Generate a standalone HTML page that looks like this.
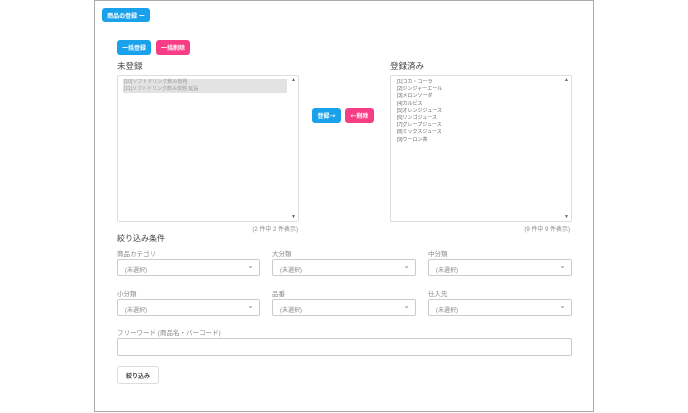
<!DOCTYPE html><html><head><meta charset="utf-8"><style>
*{box-sizing:border-box;margin:0;padding:0}
body{width:688px;height:413px;background:#fff;font-family:"Liberation Sans","Noto Sans CJK JP",sans-serif;position:relative;overflow:hidden;color:#555}
.a{position:absolute}
.frame{left:94px;top:0;width:500px;height:412px;border:1px solid #aaa}
.btn{position:absolute;color:#fff;font-size:6px;font-weight:bold;border-radius:3px;display:flex;align-items:center;justify-content:center}
.b{background:#1aa1eb}.p{background:#f73d85}
.ar{font-family:"DejaVu Sans",sans-serif;font-weight:normal;font-size:7px}
.h{font-size:8.5px;color:#444}
.lb{position:absolute;border:1px solid #ddd;border-radius:2px;background:#fff}
.it{font-size:5px;color:#666;line-height:7.2px}
.lab{font-size:6.5px;color:#888}
.sel{position:absolute;height:17px;border:1px solid #ccc;border-radius:2px;font-size:6px;color:#888;padding:5px 7px}
.sel:after{content:"⌄";position:absolute;right:5px;top:1px;font-size:8px;color:#888}
.cnt{font-size:6px;color:#888}
</style></head><body>
<div class="a frame"></div>
<div class="btn b" style="left:102px;top:8px;width:48px;height:14px">商品の登録 ー</div>
<div class="btn b" style="left:117px;top:40px;width:34px;height:15px">一括登録</div>
<div class="btn p" style="left:156px;top:40px;width:34px;height:15px">一括削除</div>
<div class="a h" style="left:117px;top:60px">未登録</div>
<div class="a h" style="left:390px;top:60px">登録済み</div>
<div class="lb" style="left:117px;top:75px;width:182px;height:147px">
<div style="position:absolute;left:5px;top:3px;width:164px;height:14px;background:#e3e3e3"></div>
<div class="it" style="position:absolute;left:6px;top:3px;color:#999">[10]ソフトドリンク飲み放題<br>[11]ソフトドリンク飲み放題 延長</div>
<div style="position:absolute;right:2px;top:1px;font-size:5px;color:#666">▲</div>
<div style="position:absolute;right:2px;bottom:1px;font-size:5px;color:#666">▼</div>
</div>
<div class="lb" style="left:390px;top:75px;width:182px;height:147px">
<div class="it" style="position:absolute;left:6px;top:3px">[1]コカ・コーラ<br>[2]ジンジャーエール<br>[3]メロンソーダ<br>[4]カルピス<br>[5]オレンジジュース<br>[6]リンゴジュース<br>[7]グレープジュース<br>[8]ミックスジュース<br>[9]ウーロン茶</div>
<div style="position:absolute;right:2px;top:1px;font-size:5px;color:#666">▲</div>
<div style="position:absolute;right:2px;bottom:1px;font-size:5px;color:#666">▼</div>
</div>
<div class="btn b" style="left:312px;top:108px;width:29px;height:15px">登録<span class="ar">→</span></div>
<div class="btn p" style="left:345px;top:108px;width:29px;height:15px"><span class="ar">←</span>削除</div>
<div class="a cnt" style="left:230px;top:224px;width:68px;text-align:right">(2 件中 2 件表示)</div>
<div class="a cnt" style="left:500px;top:224px;width:70px;text-align:right">(9 件中 9 件表示)</div>
<div class="a h" style="left:117px;top:233px;font-size:8px">絞り込み条件</div>
<div class="a lab" style="left:117px;top:248px">商品カテゴリ</div>
<div class="a lab" style="left:272px;top:248px">大分類</div>
<div class="a lab" style="left:428px;top:248px">中分類</div>
<div class="sel" style="left:117px;top:259px;width:143px">(未選択)</div>
<div class="sel" style="left:272px;top:259px;width:144px">(未選択)</div>
<div class="sel" style="left:428px;top:259px;width:144px">(未選択)</div>
<div class="a lab" style="left:117px;top:288px">小分類</div>
<div class="a lab" style="left:272px;top:288px">品番</div>
<div class="a lab" style="left:428px;top:288px">仕入先</div>
<div class="sel" style="left:117px;top:299px;width:143px">(未選択)</div>
<div class="sel" style="left:272px;top:299px;width:144px">(未選択)</div>
<div class="sel" style="left:428px;top:299px;width:144px">(未選択)</div>
<div class="a lab" style="left:117px;top:327px">フリーワード (商品名・バーコード)</div>
<div class="a" style="left:117px;top:338px;width:455px;height:18px;border:1px solid #ccc;border-radius:2px"></div>
<div class="a" style="left:117px;top:366px;width:42px;height:18px;border:1px solid #ddd;border-radius:3px;font-size:6px;font-weight:bold;color:#444;display:flex;align-items:center;justify-content:center">絞り込み</div>
</body></html>
